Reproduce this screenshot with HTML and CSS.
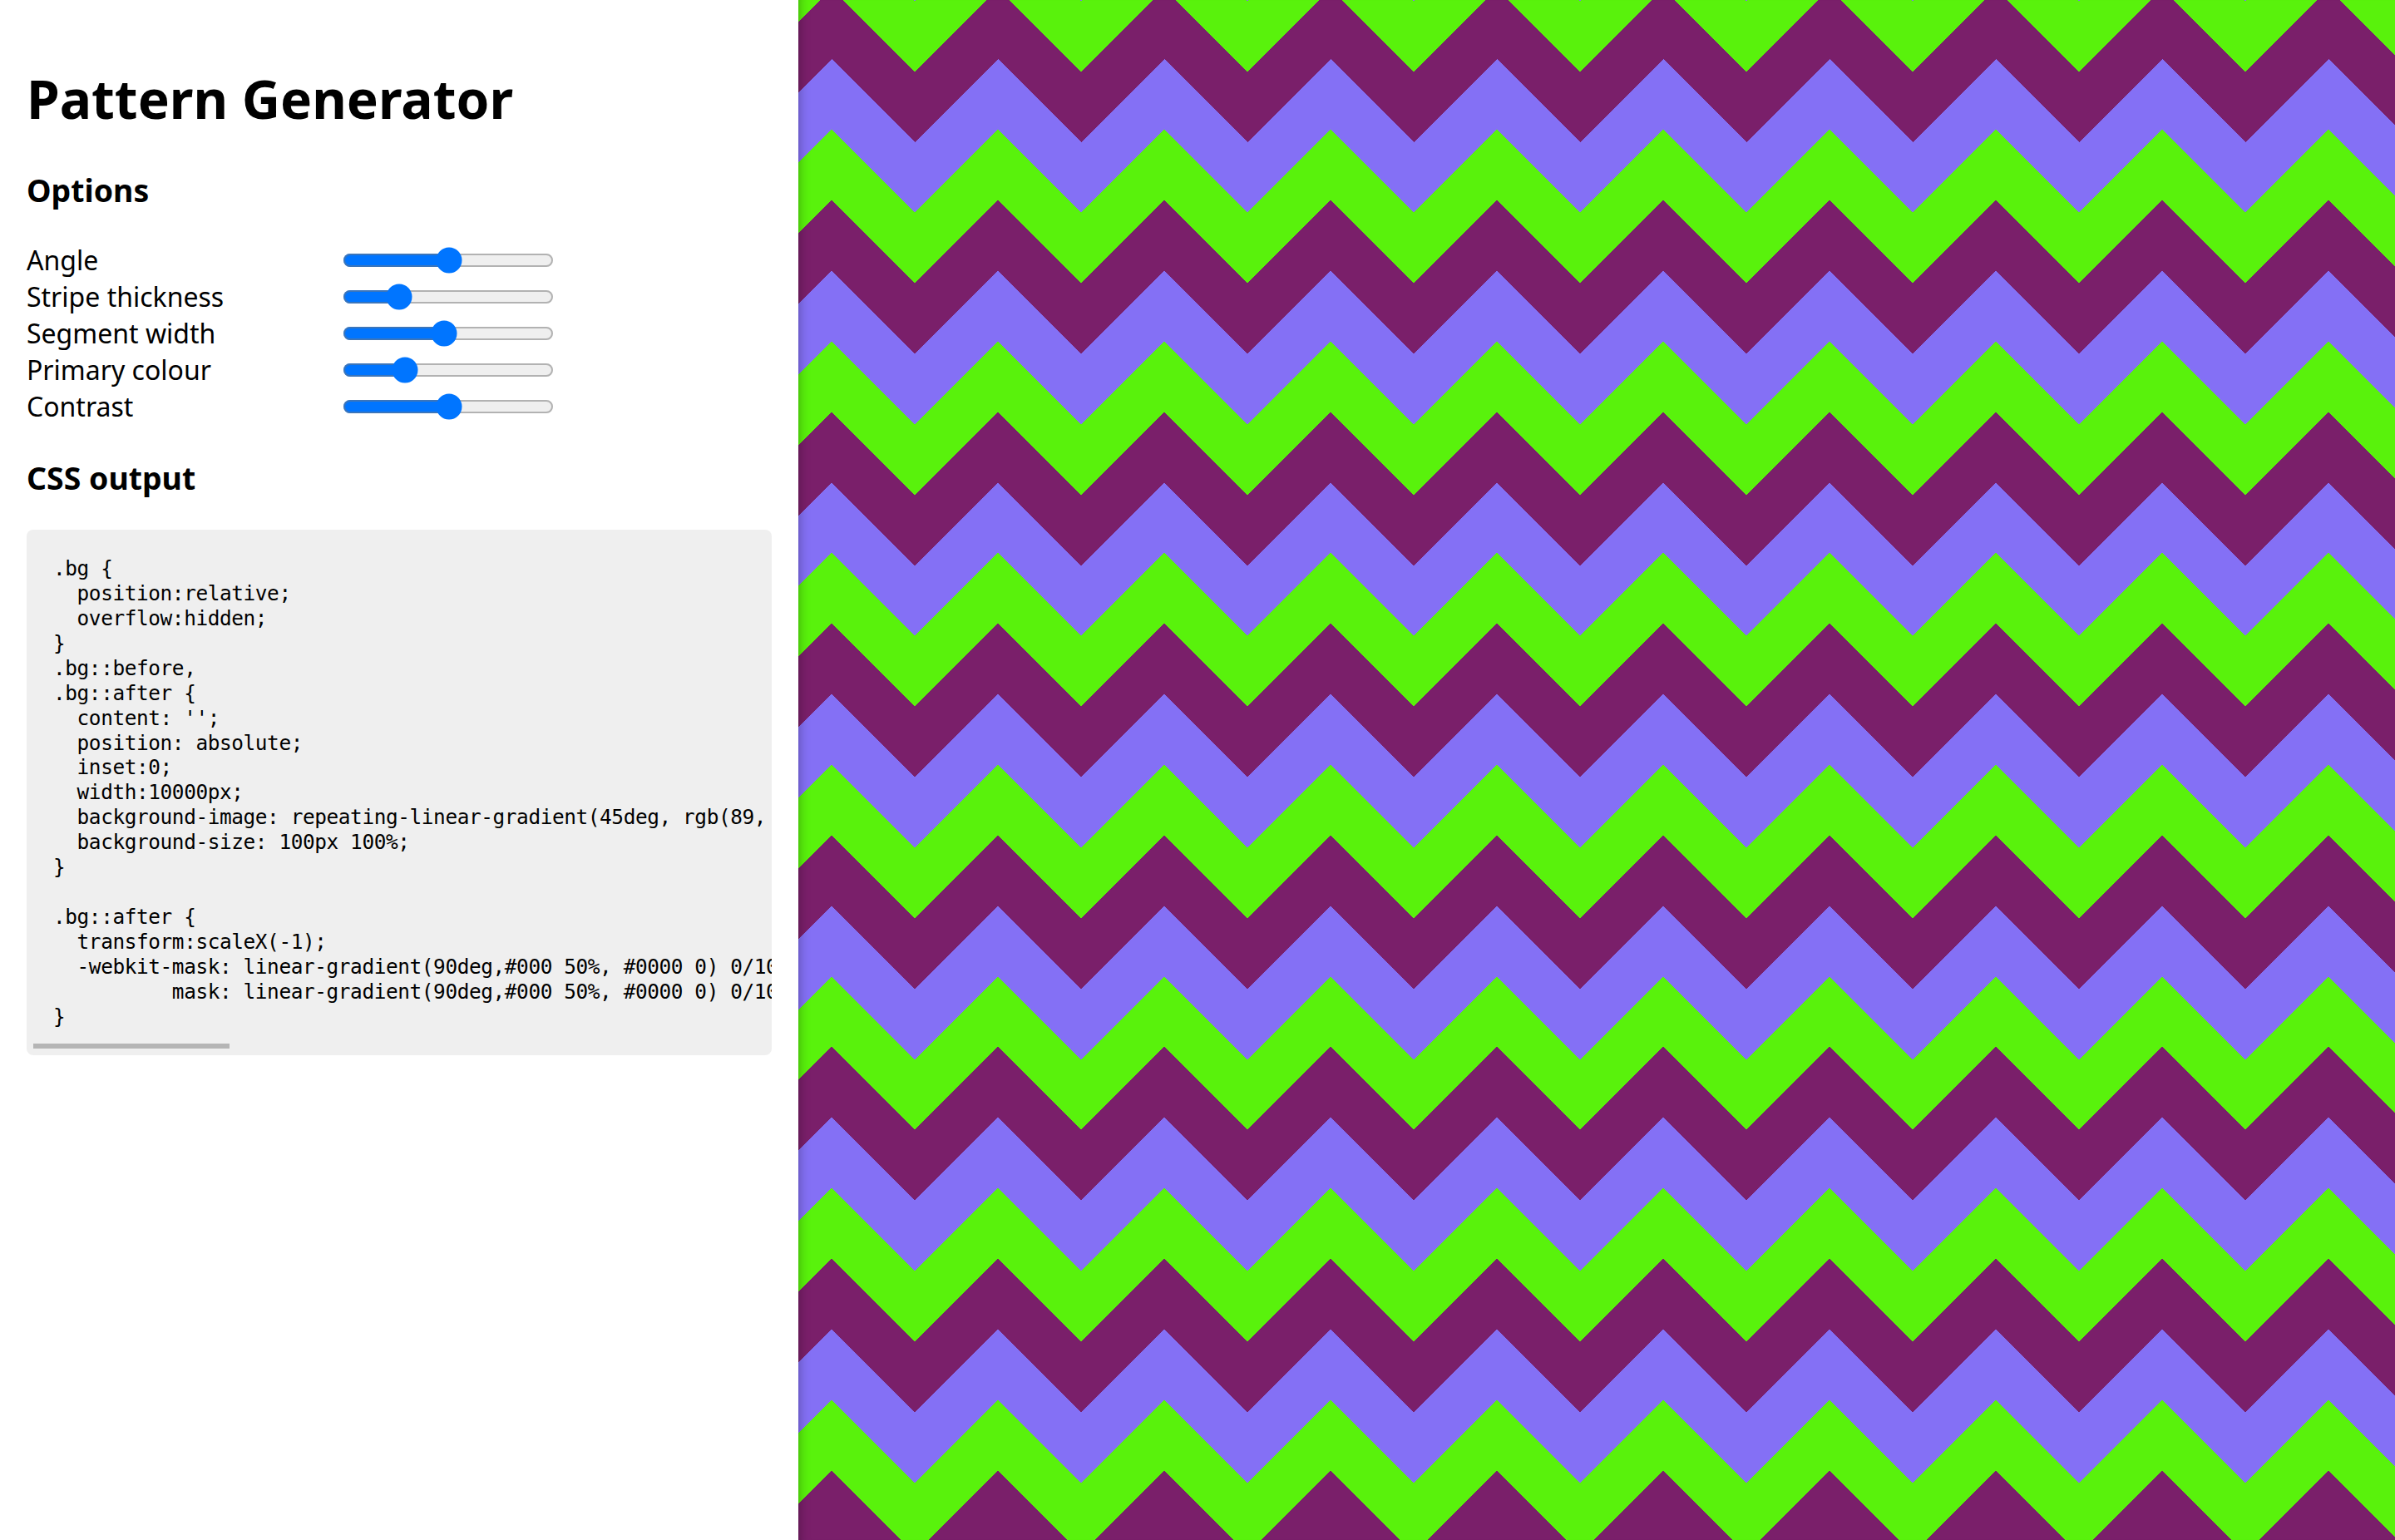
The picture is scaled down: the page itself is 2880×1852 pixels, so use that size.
FILE: index.html
```html
<!DOCTYPE html>
<html lang="en">
<head>
<meta charset="utf-8">
<title>Pattern Generator</title>
<link rel="stylesheet" href="styles.css">
</head>
<body>
<main class="app">
  <aside class="panel">
    <h1 class="title">Pattern Generator</h1>
    <h3 class="section-title">Options</h3>
    <div class="options">
      <label class="opt-label" for="angle">Angle</label>
      <input class="opt-range" id="angle" type="range" min="0" max="1000" value="506">
      <label class="opt-label" for="thickness">Stripe thickness</label>
      <input class="opt-range" id="thickness" type="range" min="0" max="1000" value="234">
      <label class="opt-label" for="segment">Segment width</label>
      <input class="opt-range" id="segment" type="range" min="0" max="1000" value="477">
      <label class="opt-label" for="primary">Primary colour</label>
      <input class="opt-range" id="primary" type="range" min="0" max="1000" value="268">
      <label class="opt-label" for="contrast">Contrast</label>
      <input class="opt-range" id="contrast" type="range" min="0" max="1000" value="506">
    </div>
    <h3 class="section-title">CSS output</h3>
    <div class="code-box">
      <pre class="code">.bg {
  position:relative;
  overflow:hidden;
}
.bg::before,
.bg::after {
  content: '';
  position: absolute;
  inset:0;
  width:10000px;
  background-image: repeating-linear-gradient(45deg, rgb(89, 242, 12) 0px, rgb(89, 242, 12) 30px, rgb(122, 31, 106) 30px, rgb(122, 31, 106) 60px, rgb(133, 112, 245) 60px, rgb(133, 112, 245) 90px, rgb(89, 242, 12) 90px);
  background-size: 100px 100%;
}

.bg::after {
  transform:scaleX(-1);
  -webkit-mask: linear-gradient(90deg,#000 50%, #0000 0) 0/100px;
          mask: linear-gradient(90deg,#000 50%, #0000 0) 0/100px;
}</pre>
      <span class="code-scroll" aria-hidden="true"></span>
    </div>
  </aside>
  <section class="preview" aria-label="Pattern preview"></section>
</main>
</body>
</html>
```
FILE: styles.css
```css
html {
  zoom: 2;
}

body {
  margin: 0;
  font-family: "Noto Sans", "Open Sans", sans-serif;
  color: #000;
  background: #fff;
}

.app {
  display: flex;
  height: 926px;
}

.panel {
  width: 480px;
  flex: none;
  box-sizing: border-box;
  padding: 16px;
  background: #fff;
}

.title {
  font-size: 32px;
  font-weight: 700;
  margin: 21.44px 0 20.5px;
  line-height: normal;
}

.section-title {
  font-size: 18.72px;
  font-weight: 700;
  margin: 18.72px 0;
  line-height: normal;
}

.options {
  display: grid;
  grid-template-columns: 190px auto;
  grid-auto-rows: 22px;
  align-items: center;
  justify-content: start;
}

.opt-label {
  font-size: 16px;
  line-height: 22px;
}

.opt-range {
  margin: 0;
  width: 127px;
}

.code-box {
  position: relative;
}

.code {
  margin: 0;
  padding: 16px 16px 16px;
  background: #efefef;
  border-radius: 4px;
  font-family: "DejaVu Sans Mono", "Liberation Mono", monospace;
  font-size: 12.2px;
  letter-spacing: -0.2px;
  line-height: 14.95px;
  overflow: hidden;
}

.code-scroll {
  position: absolute;
  left: 4px;
  bottom: 4px;
  width: 118px;
  height: 3px;
  background: #b5b5b5;
}

.preview {
  flex: 1;
  position: relative;
  overflow: hidden;
  background: repeating-linear-gradient(45deg, #7a1f6a -0.32px 29.68px, #59f20c 29.68px 59.68px, #8470f5 59.68px 89.68px) 20px 0 / 100px 100%;
}

.preview::before {
  content: "";
  position: absolute;
  inset: 0;
  background: repeating-linear-gradient(135deg, #59f20c 0.46px 30.46px, #7a1f6a 30.46px 60.46px, #8470f5 60.46px 90.46px) 70px 0 / 100px 100%;
  -webkit-mask: linear-gradient(90deg, #000 50%, transparent 0) 70px 0 / 100px 100%;
  mask: linear-gradient(90deg, #000 50%, transparent 0) 70px 0 / 100px 100%;
}

.preview::after {
  content: "";
  position: absolute;
  inset: 0;
  box-shadow: inset 7px 0 7px -7px rgba(0, 0, 0, 0.35);
  pointer-events: none;
}
```
